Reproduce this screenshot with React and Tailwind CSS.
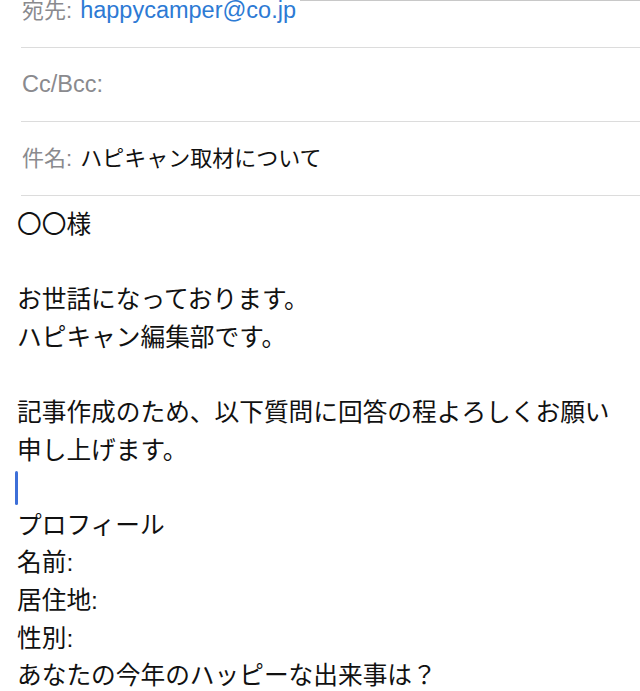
import React from "react";

const font = {
  fontFamily: '"Liberation Sans", "Noto Sans CJK JP", sans-serif',
};

const HeaderRow = ({ label, children, first }) => (
  <div
    className={`flex items-center h-[74px] ml-[21px] border-b border-[#dcdcdc] ${
      first ? "-mt-[26px]" : ""
    }`}
  >
    <span className="text-[22px] text-[#8a8a8e] pl-px">{label}</span>
    {children}
  </div>
);

const bodyLines = [
  "〇〇様",
  "",
  "お世話になっております。",
  "ハピキャン編集部です。",
  "",
  "記事作成のため、以下質問に回答の程よろしくお願い",
  "申し上げます。",
  null,
  "プロフィール",
  "名前:",
  "居住地:",
  "性別:",
  "あなたの今年のハッピーな出来事は？",
];

export default function App() {
  return (
    <div className="w-[640px] h-[691px] overflow-hidden bg-white relative" style={font}>
      {/* leftover edge of the frame above */}
      <div className="absolute top-0 right-0 w-[340px] h-px bg-[#c8c8c8]" />

      {/* Header fields */}
      <HeaderRow label="宛先:" first>
        <span className="text-[23.5px] text-[#2d7ad4] ml-2">happycamper@co.jp</span>
      </HeaderRow>
      <HeaderRow label={<span className="text-[23.5px]">Cc/Bcc:</span>} />
      <HeaderRow label="件名:">
        <span className="text-[22px] text-[#111] ml-2">ハピキャン取材について</span>
      </HeaderRow>

      {/* Body */}
      <div className="pt-[10px] pl-[17px] text-[24.7px] text-[#111] leading-[37.6px]">
        {bodyLines.map((line, i) =>
          line === null ? (
            <div key={i} className="h-[37.6px] flex items-center">
              <div className="w-[3px] h-[34px] bg-[#3d6fd8] rounded-sm -ml-[2px]" />
            </div>
          ) : (
            <div key={i} className="h-[37.6px] whitespace-nowrap">
              {line || "\u00a0"}
            </div>
          )
        )}
      </div>
    </div>
  );
}
